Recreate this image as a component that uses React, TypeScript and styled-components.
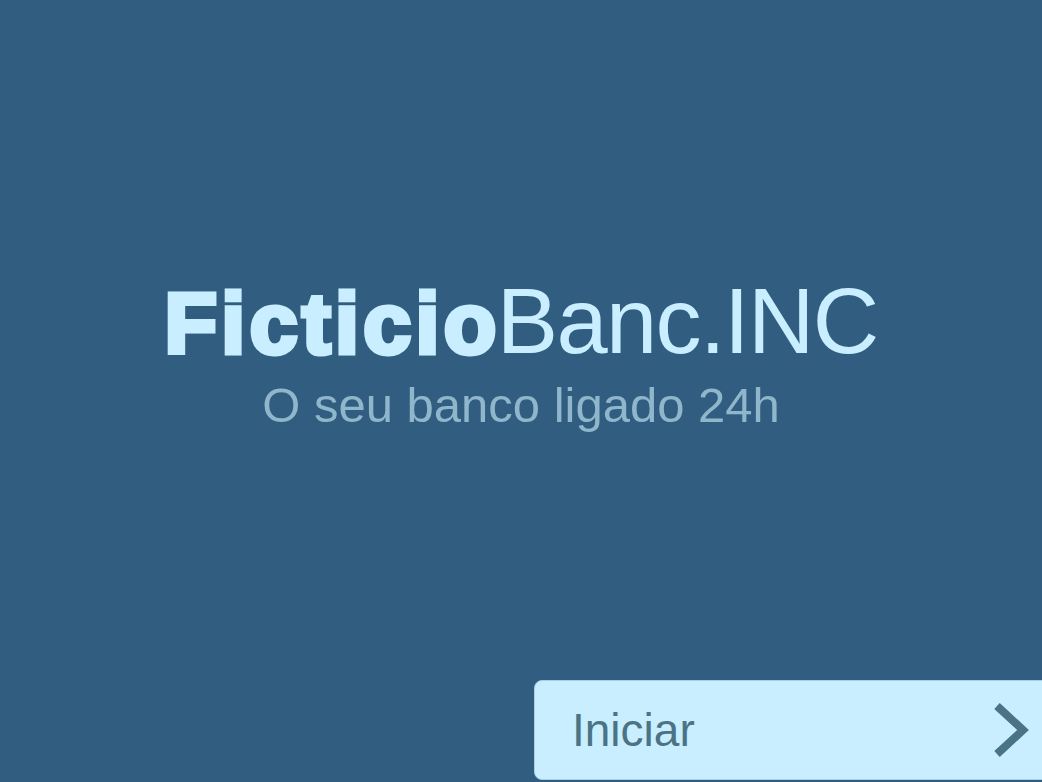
import React from "react";
import styled, { createGlobalStyle } from "styled-components";

const Colours = {
  background: "#315e80",
  title: "#c8eeff",
  subtitle: "#8fb6ca",
  buttonBg: "#c8eeff",
  buttonText: "#4a7385",
};

const GlobalStyle = createGlobalStyle`
  html, body {
    margin: 0;
    padding: 0;
    height: 100%;
    background: ${Colours.background};
    font-family: "Liberation Sans", Arial, sans-serif;
    overflow: hidden;
  }
  #root {
    height: 100%;
  }
`;

const Page = styled.div`
  height: 100vh;
  display: flex;
  flex-direction: column;
  background: ${Colours.background};
`;

const Hero = styled.main`
  flex: 1;
  display: flex;
  flex-direction: column;
  align-items: center;
  justify-content: center;
  padding-top: 24px;
`;

const Title = styled.h1`
  margin: 0;
  font-size: 92px;
  line-height: 1;
  font-weight: 400;
  color: ${Colours.title};
  letter-spacing: -1.6px;
  white-space: nowrap;
`;

const Heavy = styled.span`
  font-size: 86px;
  font-weight: 700;
  letter-spacing: 4.4px;
  margin-right: -4px;
  -webkit-text-stroke: 5px ${Colours.title};
  paint-order: stroke fill;
`;

const Subtitle = styled.p`
  margin: 14px 0 0;
  font-size: 49px;
  line-height: 1;
  color: ${Colours.subtitle};
`;

const Footer = styled.footer`
  display: flex;
  justify-content: flex-end;
  padding-bottom: 2px;
`;

const StartButton = styled.button`
  width: 516px;
  height: 100px;
  margin-right: -8px;
  display: flex;
  align-items: center;
  justify-content: space-between;
  padding: 0 18px 0 37px;
  box-sizing: border-box;
  background: ${Colours.buttonBg};
  border: 1px solid #a9cfe0;
  border-radius: 8px;
  color: ${Colours.buttonText};
  font-family: "Liberation Sans", Arial, sans-serif;
  font-size: 46px;
  cursor: pointer;
`;

const Chevron = () => (
  <svg width="40" height="56" viewBox="0 0 40 56" fill="none">
    <path d="M6 4 L32 28 L6 52" stroke={Colours.buttonText} strokeWidth="8" />
  </svg>
);

const App = () => {
  return (
    <Page>
      <GlobalStyle />
      <Hero>
        <Title>
          <Heavy>Ficticio</Heavy>Banc.INC
        </Title>
        <Subtitle>O seu banco ligado 24h</Subtitle>
      </Hero>
      <Footer>
        <StartButton>
          Iniciar
          <Chevron />
        </StartButton>
      </Footer>
    </Page>
  );
};

export default App;
